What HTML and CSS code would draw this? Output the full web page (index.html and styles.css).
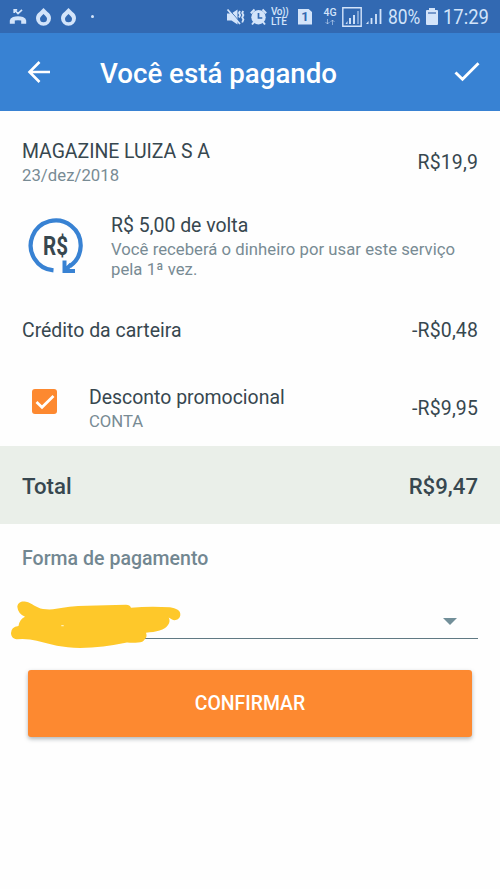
FILE: index.html
```html
<!DOCTYPE html>
<html lang="pt-BR">
<head>
<meta charset="utf-8">
<meta name="viewport" content="width=device-width, initial-scale=1">
<title>Você está pagando</title>
<link rel="stylesheet" href="styles.css">
</head>
<body>
<div class="status">
  <div class="notifications">
    <svg width="18" height="18" viewBox="0 0 18 18"><path d="M5.200 5V1.800h3M5.500 2L9 5.500 13 1.800" fill="none" stroke="currentColor" stroke-width="1.700"/><path d="M.8 15.800v-3.300Q1 10 4 9q5-1.500 10 0 3 1 3.200 3.500v3.300h-5v-3.200q-3.200-.8-6.400 0v3.200z" fill="currentColor"/></svg>
    <svg width="17" height="18" viewBox="0 0 17 18"><path d="M8.500 0l4 4Q16 6.500 16 10.200A7.400 7.400 0 0 1 1 10.200Q1 6.500 4.500 4zM8.500 6Q5 9 5 10.800a3.500 3.500 0 0 0 7 0Q12 9 8.500 6z" fill="currentColor" fill-rule="evenodd"/></svg>
    <svg width="17" height="18" viewBox="0 0 17 18"><path d="M8.500 0l4 4Q16 6.500 16 10.200A7.400 7.400 0 0 1 1 10.200Q1 6.500 4.500 4zM8.500 6Q5 9 5 10.800a3.500 3.500 0 0 0 7 0Q12 9 8.500 6z" fill="currentColor" fill-rule="evenodd"/></svg>
    <i class="dot"></i>
  </div>
  <div class="system">
    <svg width="19" height="18" viewBox="0 0 19 18"><path d="M1 5.500h4.500l6-4v15l-6-4H1z" fill="currentColor"/><path d="M2.500 .8l12 14" stroke="#3269b2" stroke-width="1"/><path d="M1.500 1.500l12.500 14.500" stroke="currentColor" stroke-width="1.800"/><path d="M14 3l-1 2 1.200 2L13 9.500M17.200 3l-1 2 1.200 2-1.200 2.500 1.200 2-1.200 3" fill="none" stroke="currentColor" stroke-width="1.800"/></svg>
    <svg class="alarm" width="18" height="18" viewBox="0 0 18 18"><circle cx="8.500" cy="9.200" r="7.200" fill="currentColor"/><path d="M.8 5.200L4.500 1.500M12.500 1.500l3.700 3.700M4 14l-2 2.500M13 14l2 2.500" stroke="currentColor" stroke-width="2"/><path d="M8.500 5v5h3.800" fill="none" stroke="#3269b2" stroke-width="1.700"/></svg>
    <span class="volte"><b>Vo))</b><b class="lte">LTE</b></span>
    <span class="sim">1</span>
    <span class="mobile"><b>4G</b><svg width="10" height="6" viewBox="0 0 10 6"><path d="M2.500 0v5M.5 3l2 2 2-2M7.500 6V1M5.500 3l2-2 2 2" stroke="currentColor" fill="none" opacity=".55"/></svg></span>
    <svg class="boxed" width="20" height="20" viewBox="0 0 20 20"><path d="M.8.800h18.400v18.400H.8z" fill="none" stroke="currentColor" stroke-width="1.400"/><path d="M3.500 17l2-3v3z" fill="currentColor"/><path d="M8 17v-6M12 17V8" stroke="currentColor" stroke-width="1.900"/><path d="M16 17V4" stroke="currentColor" stroke-width="1.900" opacity=".5"/></svg>
    <svg class="signal" width="16" height="17" viewBox="0 0 16 17"><path d="M0 16l2.500-3v3z" fill="currentColor"/><path d="M5.500 16v-6M10 16V6M14.500 16V1" stroke="currentColor" stroke-width="1.800"/></svg>
    <span class="percent">80%</span>
    <svg class="battery" width="12" height="18" viewBox="0 0 12 18"><path d="M3 0h6v2h2q1 0 1 1v13q0 1-1 1H1q-1 0-1-1V3q0-1 1-1h2z" fill="currentColor"/><path d="M2 4h8v2H2z" fill="#7598cc"/></svg>
    <span class="clock">17:29</span>
  </div>
</div>
<header class="bar">
  <svg class="back" width="24" height="24" viewBox="0 0 24 24"><path d="M23 12H2.500M12.500 2L2.500 12l10 10" fill="none" stroke="#fff" stroke-width="2.600"/></svg>
  <h1><span>Você está pagando</span></h1>
  <svg class="done" width="26" height="20" viewBox="0 0 26 20"><path d="M1.500 10.500l7 6.700L24.500 1.300" fill="none" stroke="#fff" stroke-width="2.900"/></svg>
</header>
<main>
  <section class="row merchant">
    <div><p class="name">MAGAZINE LUIZA S A</p><p class="sub date">23/dez/2018</p></div>
    <span class="amount">R$19,9</span>
  </section>
  <section class="cashback">
    <svg width="56" height="58" viewBox="0 0 56 58"><path d="M26.500 53.400A25 25 0 1 1 43 49" fill="none" stroke="#3882d3" stroke-width="4.200"/><path d="M37.500 43.500V54H48M38 53.500l6-6" fill="none" stroke="#3882d3" stroke-width="4"/><text x="28.500" y="37.500" text-anchor="middle" textLength="25" lengthAdjust="spacingAndGlyphs" class="coin">R$</text></svg>
    <div><p class="name back-title">R$ 5,00 de volta</p><p class="sub note">Você receberá o dinheiro por usar este serviço<br>pela 1ª vez.</p></div>
  </section>
  <section class="row wallet"><span class="credit">Crédito da carteira</span><span class="amount">-R$0,48</span></section>
  <section class="row promo">
    <span class="checkbox"><svg width="20" height="16" viewBox="0 0 20 16"><path d="M1.500 8l5.500 5.300L18.500 2" fill="none" stroke="#fff" stroke-width="2.700"/></svg></span>
    <div class="grow"><p class="name promo-title">Desconto promocional</p><p class="sub account">CONTA</p></div>
    <span class="amount">-R$9,95</span>
  </section>
  <section class="row total"><span>Total</span><span class="sum">R$9,47</span></section>
  <section class="payment">
    <h2><span>Forma de pagamento</span></h2>
    <div class="select">
      <svg class="scribble" width="172" height="50" viewBox="0 0 172 50"><path d="M6.300 6.700C7 2 11 .8 15 1.800 21 3 25 8 32 9Q37 9.700 42 9.300 58 6 76 5.700T115 4.700q4 0 5 3Q139 6 159 7.300c6 1 11 3 10.300 8-.5 4-5 6-8.300 4.300l-3.300-2q2 4-.7 7.400c-3 5-12 7-22 7.700q1.500 4-1 6.300-2 3.500-7 3.500-5 .5-11 0-24 5-47 5.500C52 48 39 44 25.700 40.700Q17 38.500 5.700 39.300C2 39 0 36 0 33q0-6 7.500-7 1-7 6.500-9.300-7-3-7.700-10z" fill="#fec82a"/><ellipse cx="51.500" cy="25.700" rx="1.500" ry=".6" fill="#fff1bd"/></svg>
      <i class="caret"></i>
    </div>
  </section>
  <button class="confirm"><span>CONFIRMAR</span></button>
</main>
</body>
</html>
```
FILE: styles.css
```css
* { box-sizing: border-box; }
body { margin: 0; width: 500px; height: 889px; overflow: hidden; background: #fefefe; color: #37474f; font-family: Roboto, sans-serif; font-size: 19.45px; }
p, h1, h2 { margin: 0; }
svg { display: block; flex: none; }
span { white-space: nowrap; }

.status { height: 33px; background: #3269b2; color: #d3e4fa; display: flex; justify-content: space-between; padding: 0 11px 0 9px; }
.notifications, .system { display: flex; align-items: center; }
.notifications svg { margin-right: 8px; }
.dot { width: 3px; height: 3px; border-radius: 50%; background: currentColor; margin-left: 6px; }
.alarm { margin-left: 5px; }
.volte { display: grid; grid-template-rows: 10px 10px; width: 19px; margin-left: 3px; font-size: 10px; line-height: 10px; }
.volte b { font-weight: 500; height: 10px; overflow: hidden; letter-spacing: -.4px; }
.volte .lte { letter-spacing: 0; }
.sim { width: 14px; height: 16px; margin-left: 8px; background: #d3e4fa; color: #3269b2; clip-path: polygon(0 0, 72% 0, 100% 22%, 100% 100%, 0 100%); font-size: 13px; font-weight: 700; display: flex; align-items: center; justify-content: center; }
.mobile { display: flex; flex-direction: column; align-items: center; width: 14px; margin-left: 11px; font-size: 10.5px; line-height: 10px; }
.mobile b { font-weight: 500; }
.mobile svg { margin-top: 1px; }
.boxed { margin-left: 5px; }
.signal { margin-left: 4px; }
.percent { width: 33px; margin-left: 6px; font-size: 20px; transform: scaleX(.87); transform-origin: left; }
.battery { margin-left: 5px; }
.clock { width: 46px; margin-left: 5px; font-size: 20px; transform: scaleX(.92); transform-origin: left; }
.percent, .clock { line-height: 24px; padding-top: 1px; }

.bar { height: 78px; background: #3882d3; color: #fff; display: flex; align-items: center; padding: 0 20px 0 27px; }
.bar h1 { flex: 1; margin-left: 49px; padding-top: 3px; font-size: 27.7px; line-height: 34px; font-weight: 500; }

.row { display: flex; justify-content: space-between; align-items: center; padding: 0 22px; }
.name { line-height: 24px; white-space: nowrap; }
.sub { color: #788b94; font-size: 16.7px; line-height: 20px; white-space: nowrap; }
.amount { letter-spacing: .15px; }
.merchant { height: 102px; }
.merchant .name { padding-top: 1px; letter-spacing: -.03px; }
.merchant .sub { margin-top: 2px; letter-spacing: .05px; }
.cashback { height: 92px; display: flex; padding: 1px 22px 0 27px; gap: 28px; }
.cashback svg { margin-top: 3px; }
.cashback .note { margin-top: 2px; letter-spacing: .03px; }
.coin { font-family: Roboto, sans-serif; font-weight: 700; font-size: 25px; fill: #37474f; }
.wallet { height: 50px; padding-top: 1px; }
.promo { height: 91px; padding-top: 15px; }
.promo .name { padding-top: 1px; }
.promo .sub { margin-top: 2px; }
.checkbox { width: 25px; height: 25px; margin: -13px 32px 0 10px; border-radius: 3px; background: #fd8930; display: grid; place-items: center; }
.grow { flex: 1; }
.total { height: 78px; padding-top: 1px; background: #eaefe9; font-size: 22.2px; font-weight: 500; }
.payment { padding: 23px 22px 0; }
.payment h2 { color: #728791; font-size: 19.5px; line-height: 24px; font-weight: 500; letter-spacing: .03px; }
.select { height: 68px; border-bottom: 1px solid #607983; position: relative; display: flex; justify-content: flex-end; align-items: flex-end; padding: 0 21px 13px 0; }
.scribble { position: absolute; left: -11px; top: 29px; }
.caret { border: 7px solid transparent; border-top-color: #728f99; border-bottom: 0; }
.confirm { display: block; width: 444px; height: 67px; margin: 31px 0 0 28px; padding-top: 2px; border: 0; border-radius: 3px; background: #fd8930; color: #fff; font: 500 19.4px/24px Roboto, sans-serif; box-shadow: 0 2px 4px rgba(55, 71, 79, .4); }
```
